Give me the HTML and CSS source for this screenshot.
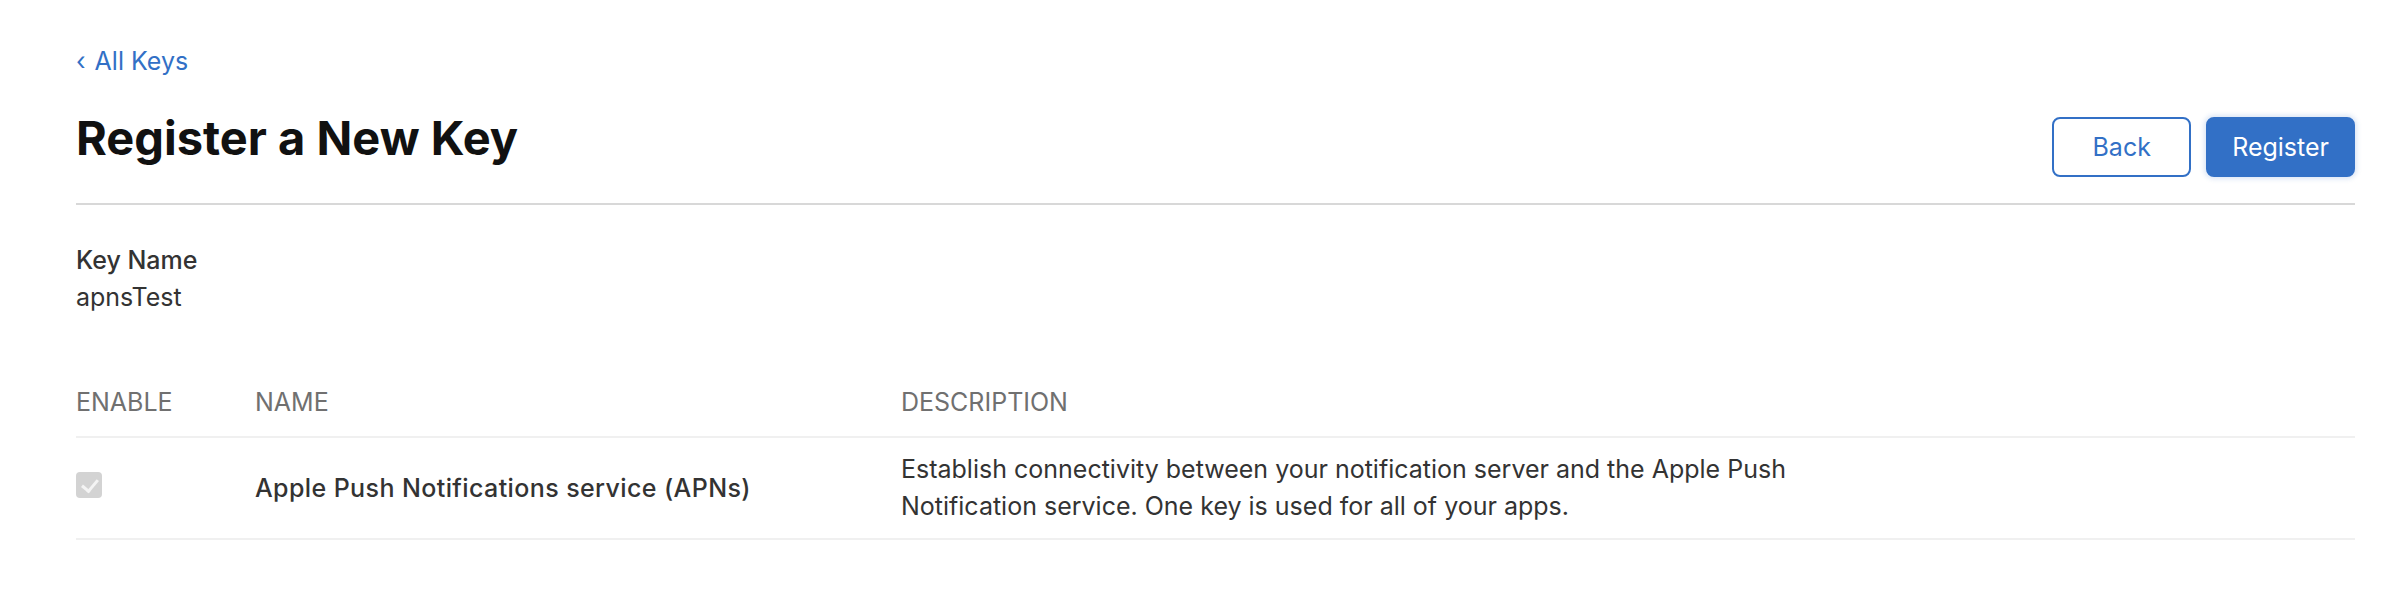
FILE: index.html
```html
<!DOCTYPE html>
<html lang="en">

<head>
    <meta charset="UTF-8" />
    <title>Register a New Key</title>
    <meta name="viewport" content="width=device-width, initial-scale=1.0" />
    <link rel="stylesheet" href="styles.css">
</head>

<body>
    <a class="back-link" href="#"><span class="chevron">‹</span>All Keys</a>

    <div class="page-header">
        <h1>Register a New Key</h1>
        <div class="actions">
            <button class="btn btn-outline">Back</button>
            <button class="btn btn-primary">Register</button>
        </div>
    </div>

    <div class="field">
        <div class="field-label">Key Name</div>
        <div class="field-value">apnsTest</div>
    </div>

    <table class="services">
        <thead>
            <tr>
                <th class="col-enable">Enable</th>
                <th class="col-name">Name</th>
                <th>Description</th>
            </tr>
        </thead>
        <tbody>
            <tr>
                <td class="col-enable"><span class="checkbox"></span></td>
                <td class="col-name service-name">Apple Push Notifications service (APNs)</td>
                <td><p class="service-desc">Establish connectivity between your notification server and the Apple Push Notification service. One key is used for all of your apps.</p></td>
            </tr>
        </tbody>
    </table>
</body>

</html>
```

FILE: styles.css
```css
* {
    box-sizing: border-box;
}

body {
    margin: 0;
    padding: 46px 31px 0 76px;
    font-family: Inter, 'Liberation Sans', sans-serif;
    font-size: 25px;
    color: #333;
    background: #fff;
}

.back-link {
    display: inline-block;
    line-height: 29px;
    color: #3270c6;
    text-decoration: none;
}

.chevron {
    display: inline-block;
    margin-right: 9px;
}

.page-header {
    display: flex;
    justify-content: space-between;
    align-items: flex-start;
    margin-top: 34px;
    padding-bottom: 26px;
    border-bottom: 2px solid #d8d8d8;
}

h1 {
    margin: 0;
    font-size: 47px;
    line-height: 56px;
    font-weight: 700;
    color: #111;
}

.actions {
    display: flex;
    gap: 15px;
    margin-top: 7px;
}

.btn {
    height: 60px;
    padding: 0 24px;
    min-width: 139px;
    border-radius: 8px;
    font-family: inherit;
    font-size: 25px;
    cursor: pointer;
}

.btn-outline {
    background: #fff;
    border: 2px solid #3270c6;
    color: #3270c6;
}

.btn-primary {
    background: #3270c6;
    border: 2px solid #3270c6;
    color: #fff;
    box-shadow: 0 0 5px 2px rgba(50, 112, 198, 0.18);
}

.field {
    margin-top: 37px;
    line-height: 37px;
}

.field-label {
    font-weight: 500;
}

.services {
    width: 100%;
    margin-top: 68px;
    border-collapse: collapse;
}

.services th {
    padding: 0 0 15px;
    line-height: 37px;
    text-align: left;
    text-transform: uppercase;
    font-weight: 400;
    color: #707070;
    border-bottom: 2px solid #f0f0f0;
}

.services td {
    padding: 13px 0;
    line-height: 37px;
    vertical-align: middle;
    border-bottom: 2px solid #f0f0f0;
}

.col-enable {
    width: 179px;
}

.col-name {
    width: 646px;
}

.service-name {
    font-weight: 500;
    letter-spacing: 0.4px;
}

.service-desc {
    margin: 0;
    max-width: 930px;
}

.checkbox {
    display: block;
    width: 26px;
    height: 26px;
    margin-bottom: 6px;
    border-radius: 4px;
    background: #d3d3d3;
    position: relative;
}

.checkbox::after {
    content: "";
    position: absolute;
    left: 9px;
    top: 4px;
    width: 7px;
    height: 13px;
    border: solid #f4f4f4;
    border-width: 0 3px 3px 0;
    transform: rotate(40deg);
}
```
